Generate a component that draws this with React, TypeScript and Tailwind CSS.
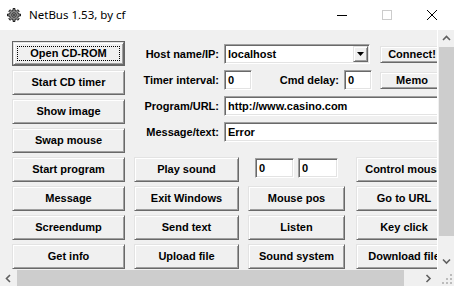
import React from 'react';

// classic win32 3D edges
const raised =
  'bg-[#f0f0f0] border border-t-[#e3e3e3] border-l-[#e3e3e3] border-b-[#696969] border-r-[#696969] shadow-[inset_1px_1px_0_#ffffff,inset_-1px_-1px_0_#a0a0a0]';
const sunken =
  'bg-white border border-t-[#a0a0a0] border-l-[#a0a0a0] border-b-white border-r-white shadow-[inset_1px_1px_0_#696969,inset_-1px_-1px_0_#e3e3e3]';

const Btn: React.FC<{ label: string; className?: string }> = ({ label, className = '' }) => (
  <div className={`${raised} h-[25px] shrink-0 flex items-center justify-center whitespace-nowrap ${className}`}>
    {label}
  </div>
);

const SmallBtn: React.FC<{ label: string; className?: string }> = ({ label, className = '' }) => (
  <div className={`${raised} h-[17px] w-[64px] shrink-0 flex items-center justify-center whitespace-nowrap ${className}`}>
    {label}
  </div>
);

const Edit: React.FC<{ value: string; className?: string }> = ({ value, className = '' }) => (
  <div className={`${sunken} h-[20px] shrink-0 flex items-center pl-[3px] whitespace-nowrap overflow-hidden ${className}`}>
    {value}
  </div>
);

const Label: React.FC<{ text: string }> = ({ text }) => (
  <div className="h-[20px] flex items-center justify-end whitespace-nowrap">{text}</div>
);

const Chevron: React.FC<{ dir: 'up' | 'down' | 'left' | 'right' }> = ({ dir }) => {
  const d = {
    up: 'M1 5 L4.5 1.5 L8 5',
    down: 'M1 1.5 L4.5 5 L8 1.5',
    left: 'M5 1 L1.5 4.5 L5 8',
    right: 'M1.5 1 L5 4.5 L1.5 8',
  }[dir];
  const vert = dir === 'up' || dir === 'down';
  return (
    <svg width={vert ? 9 : 7} height={vert ? 7 : 9} viewBox={vert ? '0 0 9 7' : '0 0 7 9'}>
      <path d={d} fill="none" stroke="#606060" strokeWidth="1.6" />
    </svg>
  );
};

const GearIcon = () => (
  <svg width="14" height="14" viewBox="0 0 14 14">
    <g fill="#8c8c8c" stroke="#000" strokeWidth="0.8">
      <path d="M6 0.5h2v2l1.4.6 1.4-1.4 1.5 1.5-1.4 1.4.6 1.4h2v2h-2l-.6 1.4 1.4 1.4-1.5 1.5-1.4-1.4-1.4.6v2H6v-2l-1.4-.6-1.4 1.4-1.5-1.5 1.4-1.4-.6-1.4h-2V6h2l.6-1.4-1.4-1.4 1.5-1.5 1.4 1.4L6 2.5z" />
    </g>
    <circle cx="7" cy="7" r="2.2" fill="#ffffff" stroke="#000" strokeWidth="0.8" />
    <path d="M7 5.4v3.2M5.4 7h3.2" stroke="#000" strokeWidth="0.9" />
  </svg>
);

export default function App() {
  return (
    <div className="w-[454px] h-[286px] flex flex-col overflow-hidden bg-[#f0f0f0] font-['Liberation_Sans',Arial,sans-serif] text-[11px] font-bold text-black">
      {/* title bar */}
      <div className="h-[30px] shrink-0 flex items-center bg-white font-normal">
        <div className="pl-[7px] flex items-center">
          <GearIcon />
        </div>
        <div className="ml-[8px] flex-1 font-['Noto_Sans',sans-serif] text-[11.5px] text-black">NetBus 1.53, by cf</div>
        <div className="w-[45px] h-full flex items-center justify-center">
          <svg width="10" height="10"><path d="M0 5.5h10" stroke="#000" strokeWidth="1" /></svg>
        </div>
        <div className="w-[45px] h-full flex items-center justify-center">
          <svg width="10" height="10"><rect x="0.5" y="0.5" width="9" height="9" fill="none" stroke="#cccccc" /></svg>
        </div>
        <div className="w-[45px] h-full flex items-center justify-center">
          <svg width="10" height="10"><path d="M0 0L10 10M10 0L0 10" stroke="#000" strokeWidth="1" /></svg>
        </div>
      </div>

      {/* client + vertical scrollbar */}
      <div className="h-[240px] shrink-0 flex">
        <div className="flex-1 min-w-0 overflow-hidden flex flex-col gap-[4px] pt-[11px] pl-[12px]">
          {/* top section */}
          <div className="flex shrink-0">
            <div className="flex flex-col gap-[4px] shrink-0">
              <div className="w-[113px] h-[25px] border border-[#646464]">
                <div className={`${raised} h-full flex items-center justify-center relative`}>
                  <div className="absolute inset-[3px] border border-dotted border-black" />
                  Open CD-ROM
                </div>
              </div>
              <Btn label="Start CD timer" className="w-[113px]" />
              <Btn label="Show image" className="w-[113px]" />
              <Btn label="Swap mouse" className="w-[113px]" />
            </div>

            <div className="ml-[5px] pt-[3px] grid grid-cols-[89px_auto] gap-x-[5px] gap-y-[6px] content-start shrink-0">
              <Label text="Host name/IP:" />
              <div className="flex items-center h-[20px]">
                <div className={`${sunken} w-[146px] h-[20px] flex items-center pl-[3px]`}>
                  <span className="flex-1">localhost</span>
                  <div className={`${raised} w-[15px] h-[16px] mr-[1px] flex items-center justify-center`}>
                    <svg width="7" height="4"><path d="M0 0h7L3.5 4z" fill="#000" /></svg>
                  </div>
                </div>
                <SmallBtn label="Connect!" className="ml-[10px]" />
              </div>

              <Label text="Timer interval:" />
              <div className="flex items-center h-[20px]">
                <Edit value="0" className="w-[28px]" />
                <div className="w-[87px] shrink-0 text-right">Cmd delay:</div>
                <Edit value="0" className="w-[28px] ml-[5px]" />
                <SmallBtn label="Memo" className="ml-[8px]" />
              </div>

              <Label text="Program/URL:" />
              <Edit value="http://www.casino.com" className="w-[220px]" />

              <Label text="Message/text:" />
              <Edit value="Error" className="w-[220px]" />
            </div>
          </div>

          {/* bottom grid of commands */}
          <div className="flex shrink-0">
            <Btn label="Start program" className="w-[113px]" />
            <Btn label="Play sound" className="w-[105px] ml-[9px]" />
            <div className="w-[97px] ml-[9px] shrink-0 flex items-start pt-[1px] pl-[7px] gap-[4px]">
              <Edit value="0" className="w-[39px]" />
              <Edit value="0" className="w-[40px]" />
            </div>
            <Btn label="Control mouse" className="w-[96px] ml-[11px]" />
          </div>
          <div className="flex shrink-0">
            <Btn label="Message" className="w-[113px]" />
            <Btn label="Exit Windows" className="w-[105px] ml-[9px]" />
            <Btn label="Mouse pos" className="w-[97px] ml-[9px]" />
            <Btn label="Go to URL" className="w-[96px] ml-[11px]" />
          </div>
          <div className="flex shrink-0">
            <Btn label="Screendump" className="w-[113px]" />
            <Btn label="Send text" className="w-[105px] ml-[9px]" />
            <Btn label="Listen" className="w-[97px] ml-[9px]" />
            <Btn label="Key click" className="w-[96px] ml-[11px]" />
          </div>
          <div className="flex shrink-0">
            <Btn label="Get info" className="w-[113px]" />
            <Btn label="Upload file" className="w-[105px] ml-[9px]" />
            <Btn label="Sound system" className="w-[97px] ml-[9px]" />
            <Btn label="Download file" className="w-[96px] ml-[11px]" />
          </div>
        </div>

        {/* vertical scrollbar */}
        <div className="w-[17px] shrink-0 flex flex-col bg-[#f0f0f0] border-l border-white">
          <div className="h-[17px] flex items-center justify-center">
            <Chevron dir="up" />
          </div>
          <div className="h-[189px] bg-[#cdcdcd] ml-[1px]" />
          <div className="flex-1" />
          <div className="h-[17px] flex items-center justify-center">
            <Chevron dir="down" />
          </div>
        </div>
      </div>

      {/* horizontal scrollbar */}
      <div className="h-[16px] shrink-0 flex bg-[#f0f0f0]">
        <div className="flex-1 flex">
          <div className="w-[17px] flex items-center justify-center">
            <Chevron dir="left" />
          </div>
          <div className="w-[387px] bg-[#cdcdcd]" />
          <div className="flex-1" />
          <div className="w-[17px] flex items-center justify-center">
            <Chevron dir="right" />
          </div>
        </div>
        <div className="w-[17px] flex items-end justify-end pr-[1px] pb-[1px]">
          <svg width="11" height="11" viewBox="0 0 11 11">
            <g fill="#bcbcbc">
              <rect x="8" y="0" width="2" height="2" />
              <rect x="4" y="4" width="2" height="2" />
              <rect x="8" y="4" width="2" height="2" />
              <rect x="0" y="8" width="2" height="2" />
              <rect x="4" y="8" width="2" height="2" />
              <rect x="8" y="8" width="2" height="2" />
            </g>
          </svg>
        </div>
      </div>
    </div>
  );
}
